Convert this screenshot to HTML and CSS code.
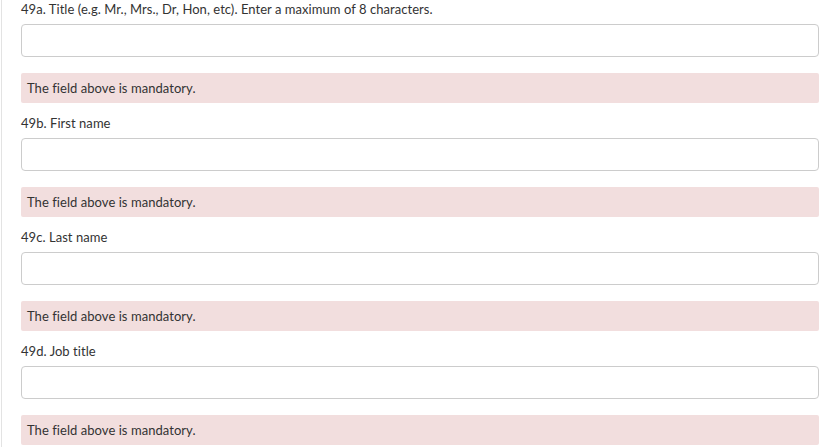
FILE: index.html
```html
<!DOCTYPE html>
<html>
<head>
<meta charset="utf-8">
<link rel="stylesheet" href="styles.css">
</head>
<body>
<div class="form">
  <div class="field">
    <label class="label">49a. Title (e.g. Mr., Mrs., Dr, Hon, etc). Enter a maximum of 8 characters.</label>
    <input class="input" type="text">
    <div class="error">The field above is mandatory.</div>
  </div>
  <div class="field">
    <label class="label">49b. First name</label>
    <input class="input" type="text">
    <div class="error">The field above is mandatory.</div>
  </div>
  <div class="field">
    <label class="label">49c. Last name</label>
    <input class="input" type="text">
    <div class="error">The field above is mandatory.</div>
  </div>
  <div class="field">
    <label class="label">49d. Job title</label>
    <input class="input" type="text">
    <div class="error">The field above is mandatory.</div>
  </div>
</div>
</body>
</html>
```
FILE: styles.css
```css
html, body {
  margin: 0;
  padding: 0;
  background: #fff;
}
body {
  font-family: Lato, "Open Sans", sans-serif;
  font-size: 13px;
  letter-spacing: 0.05px;
  font-variant-ligatures: none;
  color: #333;
}
.form {
  margin-left: 1px;
  border-left: 1px solid #e3e3e3;
  padding: 0 18px 0 19px;
  display: flex;
  flex-direction: column;
  gap: 11px;
  min-height: 447px;
  box-sizing: border-box;
}
.field {
  display: flex;
  flex-direction: column;
}
.label {
  display: block;
  line-height: 18px;
  height: 18px;
}
.input {
  margin-top: 6px;
  height: 33px;
  box-sizing: border-box;
  border: 1px solid #ccc;
  border-radius: 4px;
  background: #fff;
  width: 100%;
  padding: 6px 12px;
  font: inherit;
}
.error {
  margin-top: 16px;
  height: 30px;
  line-height: 30px;
  background: #f2dede;
  border-radius: 2px;
  padding: 0 6px;
  color: #333;
}
```
